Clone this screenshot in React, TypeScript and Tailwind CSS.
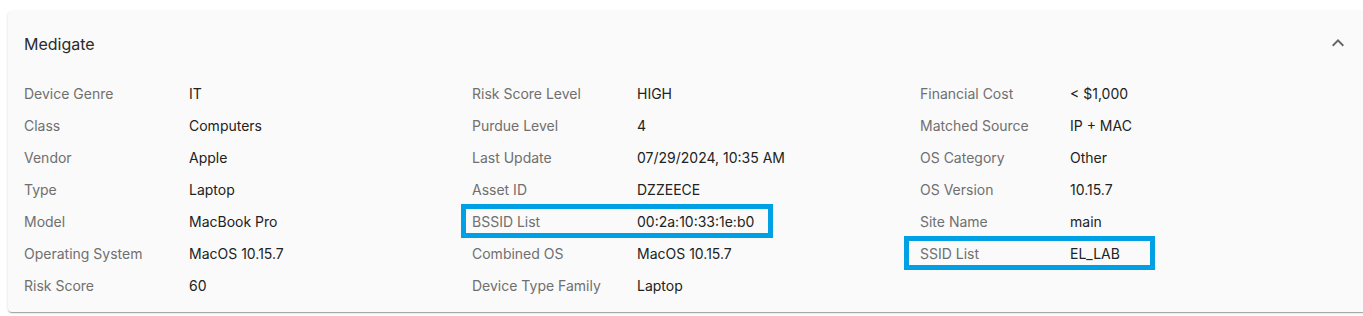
import React from 'react';

type Field = { label: string; value: string; mark?: 'bssid' | 'ssid' };

const columns: { labelWidth: string; fields: Field[] }[] = [
  {
    labelWidth: 'w-[165px]',
    fields: [
      { label: 'Device Genre', value: 'IT' },
      { label: 'Class', value: 'Computers' },
      { label: 'Vendor', value: 'Apple' },
      { label: 'Type', value: 'Laptop' },
      { label: 'Model', value: 'MacBook Pro' },
      { label: 'Operating System', value: 'MacOS 10.15.7' },
      { label: 'Risk Score', value: '60' },
    ],
  },
  {
    labelWidth: 'w-[165px]',
    fields: [
      { label: 'Risk Score Level', value: 'HIGH' },
      { label: 'Purdue Level', value: '4' },
      { label: 'Last Update', value: '07/29/2024, 10:35 AM' },
      { label: 'Asset ID', value: 'DZZEECE' },
      { label: 'BSSID List', value: '00:2a:10:33:1e:b0', mark: 'bssid' },
      { label: 'Combined OS', value: 'MacOS 10.15.7' },
      { label: 'Device Type Family', value: 'Laptop' },
    ],
  },
  {
    labelWidth: 'w-[150px]',
    fields: [
      { label: 'Financial Cost', value: '< $1,000' },
      { label: 'Matched Source', value: 'IP + MAC' },
      { label: 'OS Category', value: 'Other' },
      { label: 'OS Version', value: '10.15.7' },
      { label: 'Site Name', value: 'main' },
      { label: 'SSID List', value: 'EL_LAB', mark: 'ssid' },
    ],
  },
];

function Row({ field, labelWidth }: { field: Field; labelWidth: string }) {
  return (
    <div className="relative flex h-8 items-center text-[14px]">
      <span className={`${labelWidth} shrink-0 text-[#6f6f6f]`}>{field.label}</span>
      <span className="text-[#222]">{field.value}</span>
      {field.mark === 'bssid' && (
        <span className="pointer-events-none absolute left-[-11px] top-[-1px] h-[34px] w-[312px] border-[5px] border-[#00a1e4]" />
      )}
      {field.mark === 'ssid' && (
        <span className="pointer-events-none absolute left-[-16px] top-[-1px] h-[34px] w-[251px] border-[5px] border-[#00a1e4]" />
      )}
    </div>
  );
}

export default function App() {
  return (
    <div className="min-h-screen bg-white pt-[11px] font-['Inter',sans-serif]">
      <div className="ml-2 w-[1358px] rounded bg-[#fafafa] shadow-[0_2px_1px_-1px_rgba(0,0,0,0.2),0_1px_1px_0_rgba(0,0,0,0.14),0_1px_3px_0_rgba(0,0,0,0.12)]">
        <div className="flex h-16 items-center justify-between px-4">
          <span className="mt-[2px] text-[16px] text-[#2b2b2b]">Medigate</span>
          <svg width="24" height="24" viewBox="0 0 24 24" className="fill-[#666]">
            <path d="M12 8l-6 6 1.41 1.41L12 10.83l4.59 4.58L18 14z" />
          </svg>
        </div>
        <div className="grid grid-cols-[448px_448px_1fr] px-4 pt-[2px] pb-[11px]">
          {columns.map((col, i) => (
            <div key={i} className="flex flex-col">
              {col.fields.map((f) => (
                <Row key={f.label} field={f} labelWidth={col.labelWidth} />
              ))}
            </div>
          ))}
        </div>
      </div>
    </div>
  );
}
